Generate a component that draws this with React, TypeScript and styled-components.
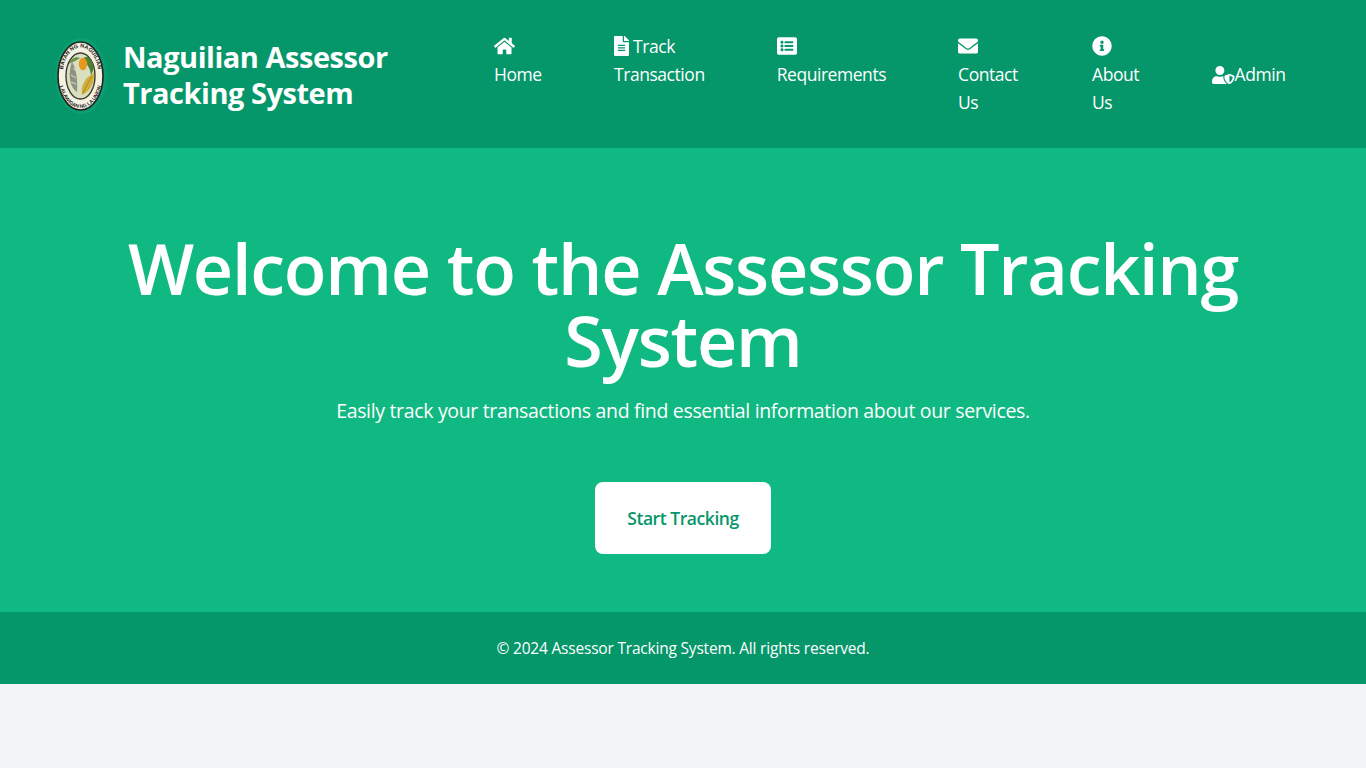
import React from 'react';
import styled, { createGlobalStyle } from 'styled-components';
import {
  FaHome,
  FaFileAlt,
  FaListAlt,
  FaEnvelope,
  FaInfoCircle,
  FaUserShield,
} from 'react-icons/fa';

const navItems = [
  { label: 'Home', icon: <FaHome />, iconWidth: 21, minWidth: 48 },
  { label: 'Track Transaction', icon: <FaFileAlt />, iconWidth: 15, minWidth: 90 },
  { label: 'Requirements', icon: <FaListAlt />, iconWidth: 20, minWidth: 109 },
  { label: 'Contact Us', icon: <FaEnvelope />, iconWidth: 20, minWidth: 62 },
  { label: 'About Us', icon: <FaInfoCircle />, iconWidth: 20, minWidth: 48 },
];

function Seal() {
  return (
    <svg viewBox="0 0 52 76" width="52" height="76" aria-hidden="true">
      <defs>
        <path id="sealTop" d="M7.5 38a18 28.5 0 0 1 36 0" />
        <path id="sealBottom" d="M3.8 38a21.7 32 0 0 0 43.4 0" />
      </defs>
      <ellipse cx="26" cy="38" rx="26" ry="38" fill="#0a9f72" />
      <ellipse cx="25.5" cy="38" rx="22.5" ry="34" fill="#f5f2e2" stroke="#23231d" strokeWidth="1.6" />
      <text fontFamily="'Liberation Sans', sans-serif" fontSize="5.5" fontWeight="700" fill="#23231d">
        <textPath href="#sealTop" startOffset="50%" textAnchor="middle">
          BAYAN NG NAGUILIAN
        </textPath>
      </text>
      <text fontFamily="'Liberation Sans', sans-serif" fontSize="5" fontWeight="700" fill="#23231d">
        <textPath href="#sealBottom" startOffset="50%" textAnchor="middle">
          LALAWIGAN NG LA UNION
        </textPath>
      </text>
      <ellipse cx="25.5" cy="38" rx="14.5" ry="23" fill="#d9e0bf" stroke="#3d3d33" strokeWidth="1.4" />
      <path d="M27 21c4-4 9-2 11 5 1 4 0 8-2 11-1-7-4-12-9-16z" fill="#4f7f33" />
      <path d="M25 20c-4-2-9 0-11 6 3-2 7-3 11-6z" fill="#6f9148" />
      <ellipse cx="28" cy="26" rx="4.2" ry="6.2" fill="#e8981f" />
      <path d="M17 24c4 6 6 18 5 30-3-2-6-6-7-12-1-6 0-13 2-18z" fill="#8f9384" />
      <path d="M18 30l3 3m-5 4l5 3m-5 4l5 2" stroke="#dcdccf" strokeWidth="1" fill="none" />
      <path d="M39 35c1 9-4 19-12 22-2-8 3-18 12-22z" fill="#d4ae3c" />
      <path d="M37 38c-3 5-6 11-9 17" stroke="#96781f" strokeWidth="0.7" fill="none" />
    </svg>
  );
}

export default function App() {
  return (
    <>
      <GlobalStyle />
      <Header>
        <Brand>
          <SealWrap>
            <Seal />
          </SealWrap>
          <BrandName>Naguilian Assessor Tracking System</BrandName>
        </Brand>
        <Nav>
          {navItems.map((item) => (
            <NavItem key={item.label} $minWidth={item.minWidth}>
              <NavLink href="#">
                <NavIcon $width={item.iconWidth}>{item.icon}</NavIcon> {item.label}
              </NavLink>
            </NavItem>
          ))}
          <AdminItem>
            <NavLink href="#">
              <AdminIcon $width={22.5}>
                <FaUserShield />
              </AdminIcon>
              Admin
            </NavLink>
          </AdminItem>
        </Nav>
      </Header>
      <Hero>
        <HeroTitle>Welcome to the Assessor Tracking System</HeroTitle>
        <HeroText>
          Easily track your transactions and find essential information about
          our services.
        </HeroText>
        <StartButton href="#">Start Tracking</StartButton>
      </Hero>
      <Footer>© 2024 Assessor Tracking System. All rights reserved.</Footer>
    </>
  );
}

const GlobalStyle = createGlobalStyle`
  body {
    margin: 0;
    min-height: 768px;
    background: #f3f4f6;
    font-family: 'Open Sans', 'Noto Sans', sans-serif;
    overflow: hidden;
  }
`;

const Header = styled.header`
  display: flex;
  align-items: flex-start;
  height: 148px;
  padding: 32px 48px 0;
  box-sizing: border-box;
  background: #059669;
  color: #fff;
`;

const Brand = styled.div`
  display: flex;
  align-items: center;
  flex: none;
  width: 446px;
  height: 84px;
`;

const SealWrap = styled.div`
  display: flex;
  flex: none;
  width: 75px;
  margin-top: 4px;
  padding-left: 7px;
  box-sizing: border-box;
`;

const BrandName = styled.h1`
  margin: 0;
  padding-top: 2px;
  width: 290px;
  font-size: 29px;
  line-height: 36px;
  font-weight: 700;
  letter-spacing: -0.47px;
`;

const Nav = styled.nav`
  display: flex;
  align-items: flex-start;
  gap: 72px;
`;

const NavItem = styled.div<{ $minWidth: number }>`
  width: min-content;
  min-width: ${(props) => props.$minWidth}px;
  flex: none;
`;

const AdminItem = styled.div`
  flex: none;
  align-self: center;
  white-space: nowrap;
`;

const NavLink = styled.a`
  color: #fff;
  text-decoration: none;
  font-size: 17.5px;
  line-height: 28px;
  letter-spacing: -0.45px;
`;

const NavIcon = styled.span<{ $width: number }>`
  svg {
    display: inline-block;
    width: ${(props) => props.$width}px;
    height: 20px;
    vertical-align: -3px;
  }
`;

const AdminIcon = styled(NavIcon)`
  svg {
    height: 18px;
  }
`;

const Hero = styled.main`
  display: flex;
  flex-direction: column;
  align-items: center;
  height: 464px;
  padding: 84px 96px 0;
  box-sizing: border-box;
  background: #10b981;
  color: #fff;
  text-align: center;
`;

const HeroTitle = styled.h2`
  margin: 0;
  font-size: 70px;
  line-height: 72px;
  font-weight: 600;
  letter-spacing: -1.25px;
`;

const HeroText = styled.p`
  margin: 21px 0 0;
  font-size: 19.5px;
  line-height: 28px;
  letter-spacing: -0.33px;
`;

const StartButton = styled.a`
  display: flex;
  align-items: center;
  justify-content: center;
  width: 176px;
  height: 72px;
  margin-top: 57px;
  border-radius: 8px;
  background: #fff;
  color: #059669;
  font-size: 17.5px;
  font-weight: 600;
  text-decoration: none;
  letter-spacing: -0.44px;
`;

const Footer = styled.footer`
  display: flex;
  align-items: center;
  justify-content: center;
  height: 72px;
  background: #059669;
  color: #fff;
  font-size: 15.5px;
  letter-spacing: -0.2px;
`;
